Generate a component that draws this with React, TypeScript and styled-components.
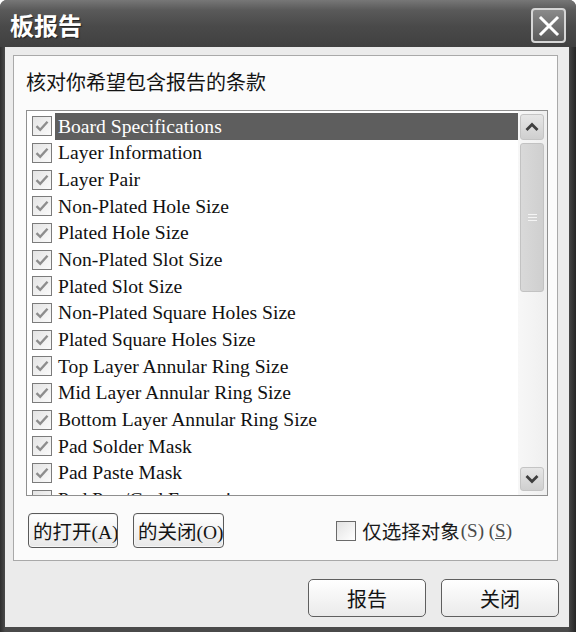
import styled, { createGlobalStyle } from 'styled-components';

const GlobalStyle = createGlobalStyle`
  html, body {
    margin: 0;
    padding: 0;
    background: #ffffff;
  }
  * {
    box-sizing: border-box;
  }
`;

const CJK = `"Noto Sans CJK SC", "Noto Sans", sans-serif`;
const SERIF = `"Liberation Serif", "Noto Sans CJK SC", serif`;

const ITEMS = [
  'Board Specifications',
  'Layer Information',
  'Layer Pair',
  'Non-Plated Hole Size',
  'Plated Hole Size',
  'Non-Plated Slot Size',
  'Plated Slot Size',
  'Non-Plated Square Holes Size',
  'Plated Square Holes Size',
  'Top Layer Annular Ring Size',
  'Mid Layer Annular Ring Size',
  'Bottom Layer Annular Ring Size',
  'Pad Solder Mask',
  'Pad Paste Mask',
  'Pad Pwr/Gnd Expansion',
  'Pad Relief Conductor Width',
  'Pad Relief Air Gap',
];

// 체크 표시 (회색)
const CheckMark = () => (
  <svg width="14" height="12" viewBox="0 0 14 12">
    <path d="M1.5 6.2 L5.2 9.8 L12.5 1.8" fill="none" stroke="#8d8d8d" strokeWidth="2.4" />
  </svg>
);

const CloseIcon = () => (
  <svg width="22" height="22" viewBox="0 0 22 22">
    <path d="M3 3 L19 19 M19 3 L3 19" stroke="#ffffff" strokeWidth="3" strokeLinecap="square" />
  </svg>
);

const Arrow = ({ down }: { down?: boolean }) => (
  <svg width="14" height="10" viewBox="0 0 14 10">
    <path
      d={down ? 'M1.5 2 L7 7.5 L12.5 2' : 'M1.5 8 L7 2.5 L12.5 8'}
      fill="none"
      stroke="#3e3e3e"
      strokeWidth="2.8"
    />
  </svg>
);

const App = () => {
  return (
    <>
      <GlobalStyle />
      <Window>
        <TitleBar>
          <Title>板报告</Title>
          <CloseButton>
            <CloseIcon />
          </CloseButton>
        </TitleBar>
        <Body>
          <Panel>
            <Prompt>核对你希望包含报告的条款</Prompt>
            <ListBox>
              <Rows>
                {ITEMS.map((item, i) => (
                  <Row key={item}>
                    <CheckBox>
                      <CheckMark />
                    </CheckBox>
                    <ItemLabel $selected={i === 0}>{item}</ItemLabel>
                  </Row>
                ))}
              </Rows>
              <ScrollBar>
                <ScrollButton>
                  <Arrow />
                </ScrollButton>
                <Track>
                  <Thumb>
                    <Grip />
                  </Thumb>
                </Track>
                <ScrollButton $down>
                  <Arrow down />
                </ScrollButton>
              </ScrollBar>
            </ListBox>
            <Options>
              <SmallButton $width={90}>
                <ButtonText>的打开(A)</ButtonText>
              </SmallButton>
              <SmallButton $width={91}>
                <ButtonText>的关闭(O)</ButtonText>
              </SmallButton>
              <Spacer />
              <OnlySelected>
                <PlainBox />
                <span>仅选择对象</span>
                <Hotkey>
                  (S) (<u>S</u>)
                </Hotkey>
              </OnlySelected>
            </Options>
          </Panel>
          <Footer>
            <DialogButton>报告</DialogButton>
            <DialogButton>关闭</DialogButton>
          </Footer>
        </Body>
      </Window>
    </>
  );
};

const Window = styled.div`
  display: flex;
  flex-direction: column;
  width: 576px;
  height: 632px;
  background: linear-gradient(to right, #2e2e2e 0px, #4a4a4a 5px, #4a4a4a 568px, #262626 576px);
  border-radius: 7px 7px 0 0;
  overflow: hidden;
`;

const TitleBar = styled.div`
  display: flex;
  justify-content: space-between;
  align-items: center;
  height: 47px;
  padding: 0 10px 0 10px;
  background: linear-gradient(to bottom, #777777 0px, #5a5a5a 10px, #4a4a4a 26px, #404040 47px);
`;

const Title = styled.div`
  color: #ffffff;
  font-family: ${CJK};
  font-size: 24px;
  font-weight: 700;
  text-shadow: 1px 1px 1px #222;
  margin-top: 2px;
`;

const CloseButton = styled.div`
  display: flex;
  justify-content: center;
  align-items: center;
  width: 35px;
  height: 35px;
  margin-top: 4px;
  border: 2px solid #d6d6d6;
  border-radius: 4px;
  background: linear-gradient(to bottom, #8a8a8a, #5a5a5a);
`;

const Body = styled.div`
  display: flex;
  flex-direction: column;
  flex: 1;
  margin: 0 7px 5px 5px;
  padding: 8px 10px 10px 8px;
  background: #ebebeb;
`;

const Panel = styled.div`
  display: flex;
  flex-direction: column;
  width: 545px;
  height: 506px;
  padding: 12px 9px 12px 12px;
  border: 1px solid #a9a9a9;
  background: #fbfbfb;
`;

const Prompt = styled.div`
  height: 28px;
  margin-bottom: 14px;
  color: #141414;
  font-family: ${CJK};
  font-size: 20px;
  line-height: 28px;
`;

const ListBox = styled.div`
  display: flex;
  height: 386px;
  border: 1px solid #8f8f8f;
  background: #ffffff;
`;

const Rows = styled.div`
  flex: 1;
  padding-top: 2px;
  overflow: hidden;
`;

const Row = styled.div`
  display: flex;
  align-items: center;
  height: 26.66px;
  padding-left: 5px;
`;

const CheckBox = styled.div`
  display: flex;
  justify-content: center;
  align-items: center;
  flex: none;
  width: 20px;
  height: 20px;
  margin-right: 3px;
  border: 1.5px solid #7b7b7b;
  background: linear-gradient(to bottom right, #e4e4e4, #fafafa);
`;

const ItemLabel = styled.div<{ $selected?: boolean }>`
  flex: 1;
  height: 27px;
  padding-left: 3px;
  color: ${({ $selected }) => ($selected ? '#ffffff' : '#111111')};
  background: ${({ $selected }) => ($selected ? '#5e5e5e' : 'transparent')};
  font-family: ${SERIF};
  font-size: 19.6px;
  line-height: 27px;
  white-space: nowrap;
`;

const ScrollBar = styled.div`
  display: flex;
  flex-direction: column;
  width: 29px;
  padding: 3px 3px 4px 2px;
  background: linear-gradient(to right, #f7f7f7, #efefef);
`;

const ScrollButton = styled.div<{ $down?: boolean }>`
  display: flex;
  justify-content: center;
  align-items: center;
  height: ${({ $down }) => ($down ? '24px' : '26px')};
  border: 1px solid #c4c4c4;
  border-radius: 3px;
  background: linear-gradient(to bottom, #e6e6e6, #cfcfcf);
`;

const Track = styled.div`
  flex: 1;
  padding-top: 3px;
`;

const Thumb = styled.div`
  display: flex;
  justify-content: center;
  align-items: center;
  height: 149px;
  border: 1px solid #c2c2c2;
  border-radius: 3px;
  background: linear-gradient(to right, #d9d9d9, #cfcfcf);
`;

const Grip = styled.div`
  width: 9px;
  height: 7px;
  border-top: 1px solid #f4f4f4;
  border-bottom: 1px solid #f4f4f4;
  background: linear-gradient(to bottom, transparent 2px, #f4f4f4 2px, #f4f4f4 3px, transparent 3px);
`;

const Options = styled.div`
  display: flex;
  align-items: center;
  gap: 15px;
  margin-top: 17px;
  padding-left: 2px;
  height: 35px;
`;

const SmallButton = styled.div<{ $width: number }>`
  display: flex;
  align-items: center;
  width: ${({ $width }) => $width}px;
  height: 35px;
  padding-left: 4px;
  overflow: hidden;
  border: 1.5px solid #5a5a5a;
  border-radius: 4px;
  background: linear-gradient(to bottom, #ffffff, #e8e8e8);
  box-shadow: inset 0 0 0 1px #f6f6f6;
`;

const ButtonText = styled.span`
  color: #141414;
  font-family: ${SERIF};
  font-size: 19.5px;
  white-space: nowrap;
`;

const Spacer = styled.div`
  flex: 1;
`;

const OnlySelected = styled.div`
  display: flex;
  align-items: center;
  margin-right: 36px;
  color: #1a1a1a;
  font-family: ${CJK};
  font-size: 19.5px;
`;

const PlainBox = styled.div`
  width: 20px;
  height: 20px;
  margin-right: 6px;
  border: 1.5px solid #6a6a6a;
  background: linear-gradient(to bottom right, #e2e2e2, #ffffff);
`;

const Hotkey = styled.span`
  margin-left: 1px;
  color: #4a4a4a;
  font-family: ${SERIF};
  font-size: 19px;
`;

const Footer = styled.div`
  display: flex;
  justify-content: flex-end;
  gap: 15px;
  margin-top: 18px;
`;

const DialogButton = styled.div`
  display: flex;
  justify-content: center;
  align-items: center;
  width: 118px;
  height: 38px;
  border: 1.5px solid #5f5f5f;
  border-radius: 5px;
  background: linear-gradient(to bottom, #ffffff, #eaeaea);
  color: #141414;
  font-family: ${CJK};
  font-size: 20px;
`;

export default App;
